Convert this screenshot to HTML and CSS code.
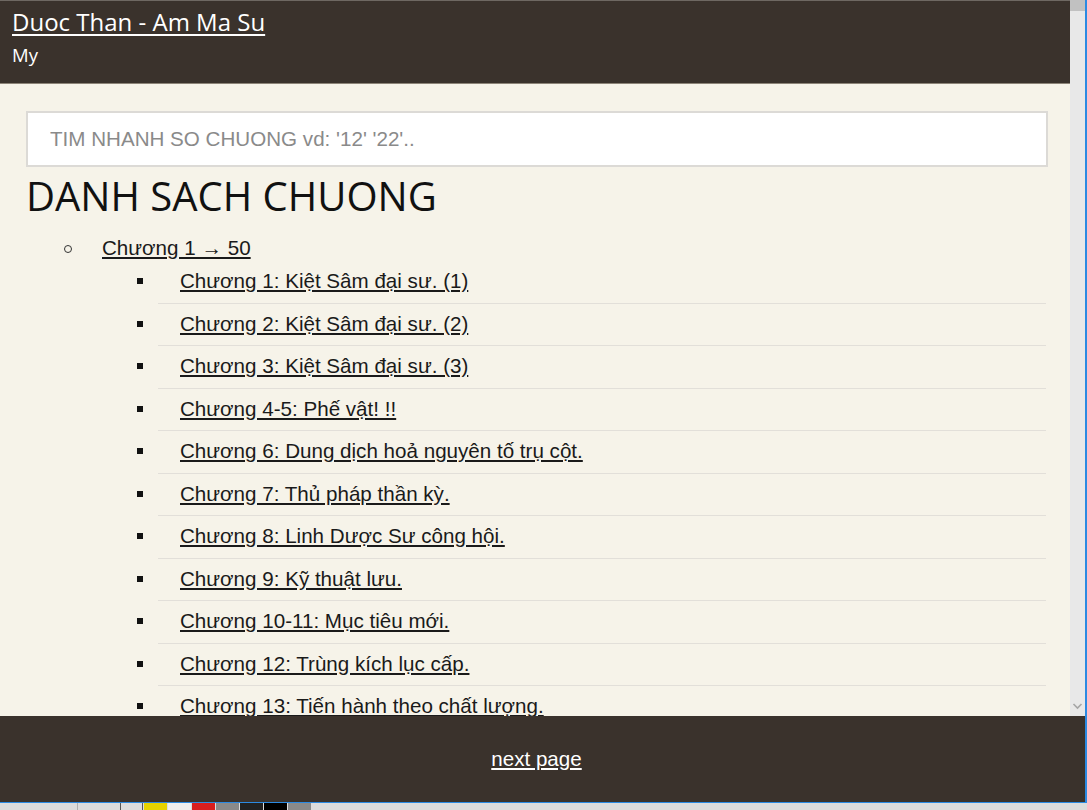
FILE: index.html
```html
<!DOCTYPE html>
<html lang="vi">
<head>
<meta charset="utf-8">
<title>Duoc Than - Am Ma Su</title>
<link rel="stylesheet" href="styles.css">
</head>
<body>
<div class="window">
  <div class="viewport">
    <div class="page">
      <header class="topbar">
        <a class="book-title" href="#">Duoc Than - Am Ma Su</a>
        <div class="author">My</div>
      </header>
      <main class="content">
        <input class="quick-find" type="text" placeholder="TIM NHANH SO CHUONG vd: '12' '22'..">
        <h1 class="section-title">DANH SACH CHUONG</h1>
        <ul class="volumes">
          <li class="volume">
            <div class="volume-head"><a href="#">Chương 1 → 50</a></div>
            <ul class="chapters">
              <li><a href="#">Chương 1: Kiệt Sâm đại sư. (1)</a></li>
              <li><a href="#">Chương 2: Kiệt Sâm đại sư. (2)</a></li>
              <li><a href="#">Chương 3: Kiệt Sâm đại sư. (3)</a></li>
              <li><a href="#">Chương 4-5: Phế vật! !!</a></li>
              <li><a href="#">Chương 6: Dung dịch hoả nguyên tố trụ cột.</a></li>
              <li><a href="#">Chương 7: Thủ pháp thần kỳ.</a></li>
              <li><a href="#">Chương 8: Linh Dược Sư công hội.</a></li>
              <li><a href="#">Chương 9: Kỹ thuật lưu.</a></li>
              <li><a href="#">Chương 10-11: Mục tiêu mới.</a></li>
              <li><a href="#">Chương 12: Trùng kích lục cấp.</a></li>
              <li><a href="#">Chương 13: Tiến hành theo chất lượng.</a></li>
            </ul>
          </li>
        </ul>
      </main>
    </div>
    <div class="scrollbar">
      <div class="scroll-thumb"></div>
      <div class="scroll-track"></div>
      <svg class="scroll-arrow" width="15" height="12" viewBox="0 0 15 12"><path d="M3.5 4 L7.5 8 L11.5 4" fill="none" stroke="#a6a6a6" stroke-width="1.6"/></svg>
    </div>
  </div>
  <footer class="pager">
    <a href="#">next page</a>
  </footer>
</div>
<div class="taskbar">
  <span class="tb tb-gap"></span>
  <span class="tb tb-pen"></span>
  <span class="tb tb-tri"></span>
  <span class="tb tb-yellow"></span>
  <span class="tb tb-white"></span>
  <span class="tb tb-red"></span>
  <span class="tb tb-gray"></span>
  <span class="tb tb-dark"></span>
  <span class="tb tb-black"></span>
  <span class="tb tb-gray"></span>
</div>
</body>
</html>
```

FILE: styles.css
```css
* {
  box-sizing: border-box;
}

html, body {
  margin: 0;
  padding: 0;
  height: 810px;
  overflow: hidden;
  background: #dcdcdc;
}

.window {
  width: 1087px;
  height: 803px;
  display: flex;
  flex-direction: column;
  border-right: 2px solid #2b8ae2;
  border-bottom: 1px solid #2b8ae2;
}

.viewport {
  height: 716px;
  display: flex;
  flex-direction: row;
}

.page {
  flex: 1;
  display: flex;
  flex-direction: column;
  background: #f6f3e9;
  overflow: hidden;
}

/* book header */
.topbar {
  height: 84px;
  flex-shrink: 0;
  background: #3a322c;
  border-top: 1px solid #6e6862;
  border-bottom: 1px solid #8c8478;
  padding: 5px 12px 0;
  font-family: "Open Sans", "Noto Sans", sans-serif;
  color: #ffffff;
}

.book-title {
  display: inline-block;
  color: #ffffff;
  font-size: 24px;
  line-height: 32px;
  text-decoration: underline;
  text-underline-offset: 3px;
}

.author {
  font-size: 18.5px;
  line-height: 26px;
  margin-top: 4px;
}

/* chapter list */
.content {
  padding: 27px 22px 0 26px;
  font-family: "Liberation Sans", Arial, sans-serif;
}

.quick-find {
  display: block;
  width: 100%;
  height: 56px;
  border: 2px solid #dcdad6;
  background: #ffffff;
  padding: 0 22px;
  font-family: "Liberation Sans", Arial, sans-serif;
  font-size: 20.6px;
  color: #333;
  outline: none;
}

.quick-find::placeholder {
  color: #8a8a8a;
}

.section-title {
  margin: 0;
  font-family: "Open Sans", "Noto Sans", sans-serif;
  font-weight: 400;
  font-size: 40px;
  line-height: 58px;
  color: #111;
}

.volumes {
  list-style: none;
  margin: 11px 0 0;
  padding: 0 0 0 76px;
  font-size: 20.6px;
}

.volume-head {
  display: flex;
  align-items: center;
  line-height: 24px;
}

.volume-head::before {
  content: "";
  flex-shrink: 0;
  width: 6px;
  height: 6px;
  border: 1px solid #333;
  border-radius: 50%;
  margin-left: -38px;
  margin-right: 32px;
  margin-top: 2px;
}

.volume-head a {
  margin-left: -2px;
}

a {
  color: #1a1a1a;
  text-decoration: underline;
}

.chapters {
  list-style: none;
  margin: 1px 2px 0 56px;
  padding: 0;
}

.chapters li {
  display: flex;
  align-items: center;
  padding: 9px 0 10px 22px;
  line-height: 22.5px;
  border-bottom: 1px solid #e2dfd9;
}

.chapters li::before {
  content: "";
  flex-shrink: 0;
  width: 6px;
  height: 6px;
  background: #111;
  margin-left: -43px;
  margin-right: 37px;
}

/* window scrollbar */
.scrollbar {
  width: 15px;
  display: flex;
  flex-direction: column;
  background: #e8e8e8;
}

.scroll-thumb {
  height: 11px;
  background: #c1c1c1;
}

.scroll-track {
  flex: 1;
}

.scroll-arrow {
  display: block;
  margin-bottom: 4px;
}

/* pager */
.pager {
  flex: 1;
  display: flex;
  align-items: center;
  justify-content: center;
  background: #3a322c;
  padding-right: 12px;
  font-family: "Liberation Sans", Arial, sans-serif;
  font-size: 20.6px;
}

.pager a {
  color: #ffffff;
}

/* desktop strip below the window */
.taskbar {
  height: 7px;
  display: flex;
  background: #dcdcdc;
  padding-left: 42px;
}

.tb {
  height: 7px;
  width: 23px;
  margin-right: 1px;
}

.tb-gap { width: 34px; }
.tb-pen { width: 42px; border-left: 1px solid #b0b0b0; }
.tb-tri { width: 23px; border-left: 1px solid #555; border-right: 1px solid #555; }
.tb-yellow { background: #e6d200; }
.tb-white { background: #eeeeee; }
.tb-red { background: #d81e1e; }
.tb-gray { background: #8a8a8a; }
.tb-dark { background: #222222; }
.tb-black { background: #000000; }
```
